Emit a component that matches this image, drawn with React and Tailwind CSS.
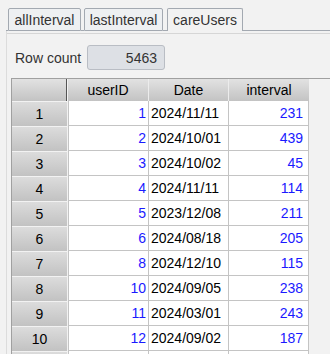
import React from "react";

const rows = [
  [1, "2024/11/11", 231],
  [2, "2024/10/01", 439],
  [3, "2024/10/02", 45],
  [4, "2024/11/11", 114],
  [5, "2023/12/08", 211],
  [6, "2024/08/18", 205],
  [8, "2024/12/10", 115],
  [10, "2024/09/05", 238],
  [11, "2024/03/01", 243],
  [12, "2024/09/02", 187],
  ["", "", ""],
];

function Tab({ label, w, selected }) {
  return (
    <div
      className={
        "h-[23px] flex items-center justify-center border-t border-l border-r border-[#a3a9b1] rounded-t-[2px] text-[#333333] " +
        (selected ? "bg-[#f2f2f2]" : "bg-[#eef0f2] border-b")
      }
      style={{ width: w }}
    >
      {label}
    </div>
  );
}

export default function App() {
  return (
    <div
      className="w-[330px] h-[354px] overflow-hidden bg-[#f2f2f2] text-[14px] leading-none"
      style={{ fontFamily: '"Liberation Sans", Arial, sans-serif' }}
    >
      {/* tab strip */}
      <div className="flex items-end h-[31px] pl-[6px]">
        <div className="w-[2px] h-px bg-[#a3a9b1]" />
        <Tab label="allInterval" w={73} />
        <div className="w-[3px] h-px bg-[#a3a9b1]" />
        <Tab label="lastInterval" w={79} />
        <div className="w-[4px] h-px bg-[#a3a9b1]" />
        <Tab label="careUsers" w={76} selected />
        <div className="flex-1 h-px bg-[#a3a9b1]" />
      </div>
      {/* panel */}
      <div className="ml-[6px] border-l border-[#dcdcdc] h-[323px]">
        <div className="h-[2px]" />
        <div className="h-px bg-[#d6d6d6]" />
        <div className="flex items-center pl-[8px] mt-[11px] h-[25px]">
          <div className="w-[72px] text-[#333333]">Row count</div>
          <div className="w-[78px] h-[25px] flex items-center justify-end pr-[7px] bg-[#dde0e5] border border-[#b9bdc4] rounded-[3px] text-[#333333]">
            5463
          </div>
        </div>
        {/* table */}
        <div className="ml-[4px] mt-[8px] border-t border-l border-[#a0a0a0] h-[280px] overflow-hidden">
          <div className="flex h-[22px]">
            <div className="w-[55px] h-full bg-gradient-to-b from-[#e2e2e2] to-[#c3c3c3] border-r border-[#555555]" />
            <div className="w-px" />
            <div className="w-[81px] h-full flex items-center justify-center bg-gradient-to-b from-[#e2e2e2] to-[#c3c3c3] border-r border-[#ececec]">
              userID
            </div>
            <div className="w-[80px] h-full flex items-center justify-center bg-gradient-to-b from-[#e2e2e2] to-[#c3c3c3] border-r border-[#ececec]">
              Date
            </div>
            <div className="w-[80px] h-full flex items-center justify-center bg-gradient-to-b from-[#e2e2e2] to-[#c3c3c3]">
              interval
            </div>
          </div>
          {rows.map((r, i) => (
            <div key={i} className="flex h-[25px]">
              <div className="w-[55px] h-full border-t border-[#f2f2f2] bg-gradient-to-b from-[#dcdcdc] to-[#c2c2c2] flex items-center justify-center text-black">
                {r[0] === "" ? "" : i + 1}
              </div>
              <div className="w-px" />
              <div className="w-[81px] h-full border-l border-r border-b border-[#c4c4c4] bg-white flex items-center justify-end pr-[2px] text-[#1a1aff]">
                {r[0]}
              </div>
              <div className="w-[80px] h-full border-r border-b border-[#c4c4c4] bg-white flex items-center pl-[2px] text-black">
                {r[1]}
              </div>
              <div className="w-[80px] h-full border-r border-b border-[#c4c4c4] bg-white flex items-center justify-end pr-[5px] text-[#1a1aff]">
                {r[2]}
              </div>
            </div>
          ))}
        </div>
      </div>
    </div>
  );
}
